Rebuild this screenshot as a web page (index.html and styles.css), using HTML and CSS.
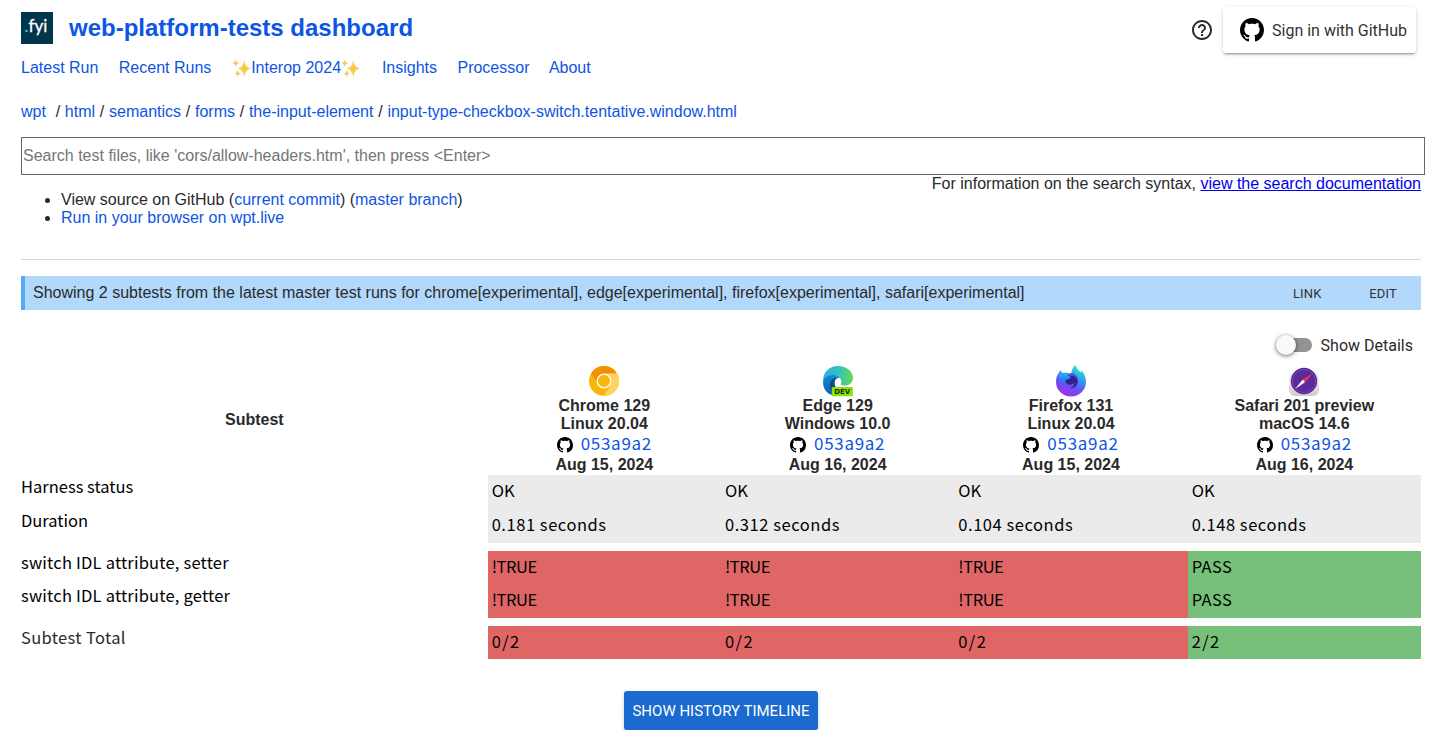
FILE: index.html
```
<!DOCTYPE html>
<html lang="en">
<head>
<meta charset="utf-8">
<title>web-platform-tests dashboard</title>
<link rel="stylesheet" href="styles.css">
</head>
<body>
<svg class="defs" width="0" height="0" aria-hidden="true">
  <defs>
    <symbol id="github" viewBox="0 0 16 16"><path d="M8 0C3.58 0 0 3.58 0 8c0 3.54 2.29 6.53 5.47 7.59.4.07.55-.17.55-.38 0-.19-.01-.82-.01-1.49-2.01.37-2.53-.49-2.69-.94-.09-.23-.48-.94-.82-1.13-.28-.15-.68-.52-.01-.53.63-.01 1.08.58 1.23.82.72 1.21 1.87.87 2.33.66.07-.52.28-.87.51-1.07-1.78-.2-3.64-.89-3.64-3.95 0-.87.31-1.59.82-2.15-.08-.2-.36-1.02.08-2.12 0 0 .67-.21 2.2.82.64-.18 1.32-.27 2-.27s1.36.09 2 .27c1.53-1.04 2.2-.82 2.2-.82.44 1.1.16 1.92.08 2.12.51.56.82 1.27.82 2.15 0 3.07-1.87 3.75-3.65 3.95.29.25.54.73.54 1.48 0 1.07-.01 1.93-.01 2.2 0 .21.15.46.55.38A8.01 8.01 0 0 0 16 8c0-4.42-3.58-8-8-8z"/></symbol>
    <symbol id="sparkles" viewBox="0 0 19 18"><g fill="#fdcb3e" stroke="#eeb64b" stroke-width=".3"><path d="M12 2Q12.6 8 18 9.5Q12.6 11 12 17Q11.4 11 6 9.5Q11.4 8 12 2Z"/><path d="M3.5 1Q3.8 3.6 6.2 4.2Q3.8 4.8 3.5 7.4Q3.2 4.8.8 4.2Q3.2 3.6 3.5 1Z"/><path d="M5.5 11.5Q5.8 14 8 14.5Q5.8 15 5.5 17.5Q5.2 15 3 14.5Q5.2 14 5.5 11.5Z"/></g></symbol>
    <linearGradient id="edgeTop" x1="0" y1="0" x2="1" y2="0"><stop stop-color="#2caee3"/><stop offset=".5" stop-color="#30c3c4"/><stop offset="1" stop-color="#68d653"/></linearGradient>
    <linearGradient id="edgeBlue" x1="0" y1="0" x2="0" y2="1"><stop stop-color="#168bd8"/><stop offset="1" stop-color="#0f5bb4"/></linearGradient>
    <linearGradient id="foxBody" x1=".8" y1="0" x2=".35" y2="1"><stop stop-color="#3ff2b6"/><stop offset=".3" stop-color="#23b5e8"/><stop offset=".65" stop-color="#6158f2"/><stop offset="1" stop-color="#a82be6"/></linearGradient>
    <linearGradient id="foxHead" x1="0" y1="0" x2="0" y2="1"><stop stop-color="#16c7fa"/><stop offset=".45" stop-color="#2780f8"/><stop offset="1" stop-color="#803af0"/></linearGradient>
    <linearGradient id="tile" x1="0" y1="0" x2="0" y2="1"><stop stop-color="#fff"/><stop offset="1" stop-color="#cfcfd2"/></linearGradient>
  </defs>
</svg>
<div class="page">
  <header class="header">
    <a class="brand" href="#"><span class="logo"><i>.</i>fyi</span><h1>web-platform-tests dashboard</h1></a>
    <div class="account">
      <svg class="help" viewBox="0 0 24 24"><path d="M11 18h2v-2h-2v2zm1-16C6.48 2 2 6.48 2 12s4.48 10 10 10 10-4.48 10-10S17.52 2 12 2zm0 18c-4.41 0-8-3.59-8-8s3.59-8 8-8 8 3.59 8 8-3.59 8-8 8zm0-14c-2.21 0-4 1.79-4 4h2c0-1.1.9-2 2-2s2 .9 2 2c0 2-3 1.75-3 5h2c0-2.25 3-2.5 3-5 0-2.21-1.79-4-4-4z"/></svg>
      <a class="signin" href="#"><svg viewBox="0 0 16 16"><use href="#github"/></svg><span>Sign in with GitHub</span></a>
    </div>
  </header>
  <nav class="nav">
    <a href="#">Latest Run</a><a href="#">Recent Runs</a><a class="interop" href="#"><svg><use href="#sparkles"/></svg>Interop 2024<svg><use href="#sparkles"/></svg></a><a href="#">Insights</a><a href="#">Processor</a><a href="#">About</a>
  </nav>
  <div class="crumbs"><a class="root" href="#">wpt</a> / <a href="#">html</a> / <a href="#">semantics</a> / <a href="#">forms</a> / <a href="#">the-input-element</a> / <a href="#">input-type-checkbox-switch.tentative.window.html</a></div>
  <input class="search" type="text" placeholder="Search test files, like 'cors/allow-headers.htm', then press &lt;Enter&gt;">
  <div class="intro">
    <ul>
      <li>View source on GitHub (<a href="#">current commit</a>) (<a href="#">master branch</a>)</li>
      <li><a href="#">Run in your browser on wpt.live</a></li>
    </ul>
    <div class="syntax">For information on the search syntax, <a href="#">view the search documentation</a></div>
  </div>
  <div class="banner">
    <span>Showing 2 subtests from the latest master test runs for chrome[experimental], edge[experimental], firefox[experimental], safari[experimental]</span>
    <div class="actions"><a class="link">LINK</a><a class="edit">EDIT</a></div>
  </div>
  <div class="details"><span class="toggle"><span class="knob"></span></span><span class="caption">Show Details</span></div>
  <table class="results">
    <thead>
      <tr>
        <th class="subtest">Subtest</th>
        <th>
          <svg class="browser" viewBox="0 0 32 32"><circle cx="16" cy="16" r="15" fill="#f9b50c"/><path d="M3 8.5A15 15 0 0 1 29 8.5L16 8.6C11 9 8 13 9 17Z" fill="#f29100"/><path d="M29 8.5A15 15 0 0 1 16 31L22.5 20Q25 14 18 8.6Z" fill="#fdd261"/><circle cx="16" cy="16" r="6.8" fill="#f9b50c" stroke="#fff" stroke-width="1.3"/></svg>
          <div>Chrome 129</div><div>Linux 20.04</div>
          <a class="commit" href="#"><svg><use href="#github"/></svg><span>053a9a2</span></a>
          <div>Aug 15, 2024</div>
        </th>
        <th>
          <svg class="browser" viewBox="0 0 32 32"><path d="M1 17C1 6 8 1 16 1C25 1 31 7 31 13C31 20 23 22 18.5 19.5C21 16 18 10 11 10Q4 10 1 17Z" fill="url(#edgeTop)"/><path d="M1 17C2 10 13 7 18 13C12 12 11 20 15 24C19 27 24 27 28 24C20 34 1 33 1 17Z" fill="url(#edgeBlue)"/><path d="M8 21C8 16 10 13 14.5 12.5C10 18 13 26 22 27L17 31C12 30 8 26 8 21Z" fill="#114a8b"/><rect x="9.8" y="22" width="21" height="9.2" rx=".7" fill="#8de000"/><text x="20.3" y="29.2" text-anchor="middle" class="dev">DEV</text></svg>
          <div>Edge 129</div><div>Windows 10.0</div>
          <a class="commit" href="#"><svg><use href="#github"/></svg><span>053a9a2</span></a>
          <div>Aug 16, 2024</div>
        </th>
        <th>
          <svg class="browser" viewBox="0 0 32 32"><path d="M20 0Q22 4 25.5 7.5Q26.5 6.5 26 5Q31 10 31 17A15 14.5 0 0 1 1 17Q1 11 4 7.5L5.5 5Q6 7 7.5 8Q11 7 16 9Q17 3 20 0Z" fill="url(#foxBody)"/><circle cx="16" cy="16.5" r="6.8" fill="#36208e"/><path d="M5 8L9 9.5L11.5 7L12 10L16 12Q15 14 11 15Q9.5 17 12 19Q16 21 20 18Q18 24 12.5 23Q7 22 6 16Q3 13 5 8Z" fill="url(#foxHead)"/><path d="M13 9Q20 6 23 14Q18 9.5 14.5 11Z" fill="#5b49dc"/></svg>
          <div>Firefox 131</div><div>Linux 20.04</div>
          <a class="commit" href="#"><svg><use href="#github"/></svg><span>053a9a2</span></a>
          <div>Aug 15, 2024</div>
        </th>
        <th>
          <svg class="browser" viewBox="0 0 32 32"><rect x="1" y="2" width="30" height="29" rx="6" fill="url(#tile)"/><circle cx="16" cy="16" r="13.2" fill="#5b2a9b"/><circle cx="16" cy="16" r="11.4" fill="none" stroke="#a58bcb" stroke-width=".8" stroke-dasharray=".6 .9"/><path d="M25 8L14.8 14.6L17 17.2Z" fill="#f5373d"/><path d="M7 24L14.8 14.6L17 17.2Z" fill="#fff"/></svg>
          <div>Safari 201 preview</div><div>macOS 14.6</div>
          <a class="commit" href="#"><svg><use href="#github"/></svg><span>053a9a2</span></a>
          <div>Aug 16, 2024</div>
        </th>
      </tr>
    </thead>
    <tbody class="neutral">
      <tr><td>Harness status</td><td>OK</td><td>OK</td><td>OK</td><td>OK</td></tr>
      <tr class="duration"><td>Duration</td><td>0.181 seconds</td><td>0.312 seconds</td><td>0.104 seconds</td><td>0.148 seconds</td></tr>
    </tbody>
    <tbody class="outcomes">
      <tr class="gap"><td colspan="5"></td></tr>
      <tr class="short"><td>switch IDL attribute, setter</td><td class="fail">!TRUE</td><td class="fail">!TRUE</td><td class="fail">!TRUE</td><td class="pass">PASS</td></tr>
      <tr><td>switch IDL attribute, getter</td><td class="fail">!TRUE</td><td class="fail">!TRUE</td><td class="fail">!TRUE</td><td class="pass">PASS</td></tr>
      <tr class="gap"><td colspan="5"></td></tr>
      <tr class="short total"><td>Subtest Total</td><td class="fail">0/2</td><td class="fail">0/2</td><td class="fail">0/2</td><td class="pass">2/2</td></tr>
    </tbody>
  </table>
  <button class="history">SHOW HISTORY TIMELINE</button>
</div>
</body>
</html>
```
FILE: styles.css
```
* { box-sizing: border-box; }
html { overflow: hidden; }
body { margin: 0; background: #fff; color: #2a2a2a; font: 16px/18px "Liberation Sans", Arial, sans-serif; }
a { color: #0d55e5; text-decoration: none; }
.defs { position: absolute; }
.page { width: 1400px; margin-left: 21px; display: flex; flex-direction: column; }

.header { display: flex; justify-content: space-between; height: 59px; }
.brand { display: flex; gap: 16px; padding-top: 12px; }
.brand h1 { margin: 2px 0 0; font-size: 24px; line-height: 28px; }
.logo { width: 32px; height: 32px; padding-right: 2px; background: #00364b; color: #fff; font: 17px/28px Lato, sans-serif; -webkit-text-stroke: .3px; text-align: center; }
.logo i { color: #4dbbd5; font-style: normal; }
.account { display: flex; padding: 7px 5px 0 0; }
.help { width: 24px; height: 24px; margin: 11px 9px 0 0; fill: #2a2a2a; }
.signin { display: flex; align-items: center; width: 193px; height: 46px; padding-left: 17px; gap: 8px; border-radius: 3px; background: #fff; color: #333; font: 16px/20px Roboto, sans-serif; white-space: nowrap; box-shadow: 0 2px 2px rgba(0,0,0,.14), 0 1px 5px rgba(0,0,0,.12), 0 3px 1px -2px rgba(0,0,0,.2); }
.signin svg { width: 24px; height: 24px; fill: #000; }
.signin span { padding-top: 2px; }

.nav { display: flex; height: 44px; gap: 20.4px; }
.nav a:last-child { margin-left: -1px; }
.interop { display: flex; padding-right: 1px; }
.interop svg { width: 19.5px; height: 18px; }
.crumbs { height: 34px; word-spacing: .3px; }
.crumbs .root { margin-right: 5px; }
.search { width: 1404px; height: 38px; padding: 1px; border: 1px solid #666; border-radius: 0; font: 16px "Liberation Sans", Arial, sans-serif; }
.search::placeholder { color: #757575; }

.intro { display: flex; justify-content: space-between; height: 85px; border-bottom: 1px solid #d8d8d8; }
.intro ul { margin: 16px 0 0; padding-left: 40px; }
.syntax a { color: #0000ee; text-decoration: underline; }

.banner { display: flex; justify-content: space-between; align-items: center; height: 34px; margin-top: 16px; padding: 0 24px 0 8px; border-left: 4px solid #58a9f5; background: #b2d8fb; }
.actions { display: flex; gap: 47.5px; padding-top: 1px; font: 13px/18px Roboto, sans-serif; letter-spacing: .2px; }
.actions a { color: #333; }

.details { display: flex; align-items: center; align-self: flex-end; gap: 9px; height: 24px; margin: 23px 8px 0 0; font: 16px/24px Roboto, sans-serif; }
.caption { padding-top: 2px; }
.toggle { display: flex; align-items: center; width: 36px; height: 14px; border-radius: 7px; background: linear-gradient(90deg, transparent 8px, #939393 8px); }
.knob { width: 20px; height: 20px; flex: none; border-radius: 50%; background: #fafafa; box-shadow: 0 1px 4px rgba(0,0,0,.6); }

.results { width: 1400px; margin-top: 8px; table-layout: fixed; border-collapse: collapse; }
.results th { height: 110px; padding: 0; vertical-align: top; font-weight: bold; }
.results .subtest { width: 33.333%; vertical-align: middle; }
.browser { display: block; width: 32px; height: 32px; margin: 0 auto; }
.dev { font: bold 7px "DejaVu Sans", sans-serif; fill: #15320a; }
.commit { display: flex; align-items: center; justify-content: center; gap: 8px; height: 23px; font: 17px/23px "Noto Sans CJK JP", sans-serif; letter-spacing: .7px; }
.commit svg { width: 16px; height: 16px; fill: #000; }
.commit span { margin-top: -4px; }
.results td { height: 34px; padding: 3px 4px 0; vertical-align: top; color: #000; font: 16.5px/25px "Noto Sans CJK JP", sans-serif; }
.results td:first-child { padding: 0; line-height: 23px; }
.neutral td:not(:first-child) { background: #ebebeb; }
.neutral .duration td:not(:first-child) { letter-spacing: .55px; }
.outcomes td:first-child { letter-spacing: .2px; }
.results .short td { height: 33px; }
.results .gap td { height: 8px; line-height: 0; }
.results .fail { background: #e06666; letter-spacing: -.45px; }
.results .pass { background: #77c07a; letter-spacing: .4px; }
.results .total .fail, .results .total .pass { letter-spacing: 1.4px; }
.results .total td:first-child { color: #2a2a2a; letter-spacing: .35px; }

.history { align-self: center; width: 194px; height: 39px; margin-top: 32px; padding: 1px 0 0; border: 0; border-radius: 3px; background: #1a6ad0; color: #fff; font: 15px/38px Roboto, sans-serif; white-space: nowrap; box-shadow: 0 2px 2px rgba(0,0,0,.14), 0 1px 5px rgba(0,0,0,.12), 0 3px 1px -2px rgba(0,0,0,.3); }
```
